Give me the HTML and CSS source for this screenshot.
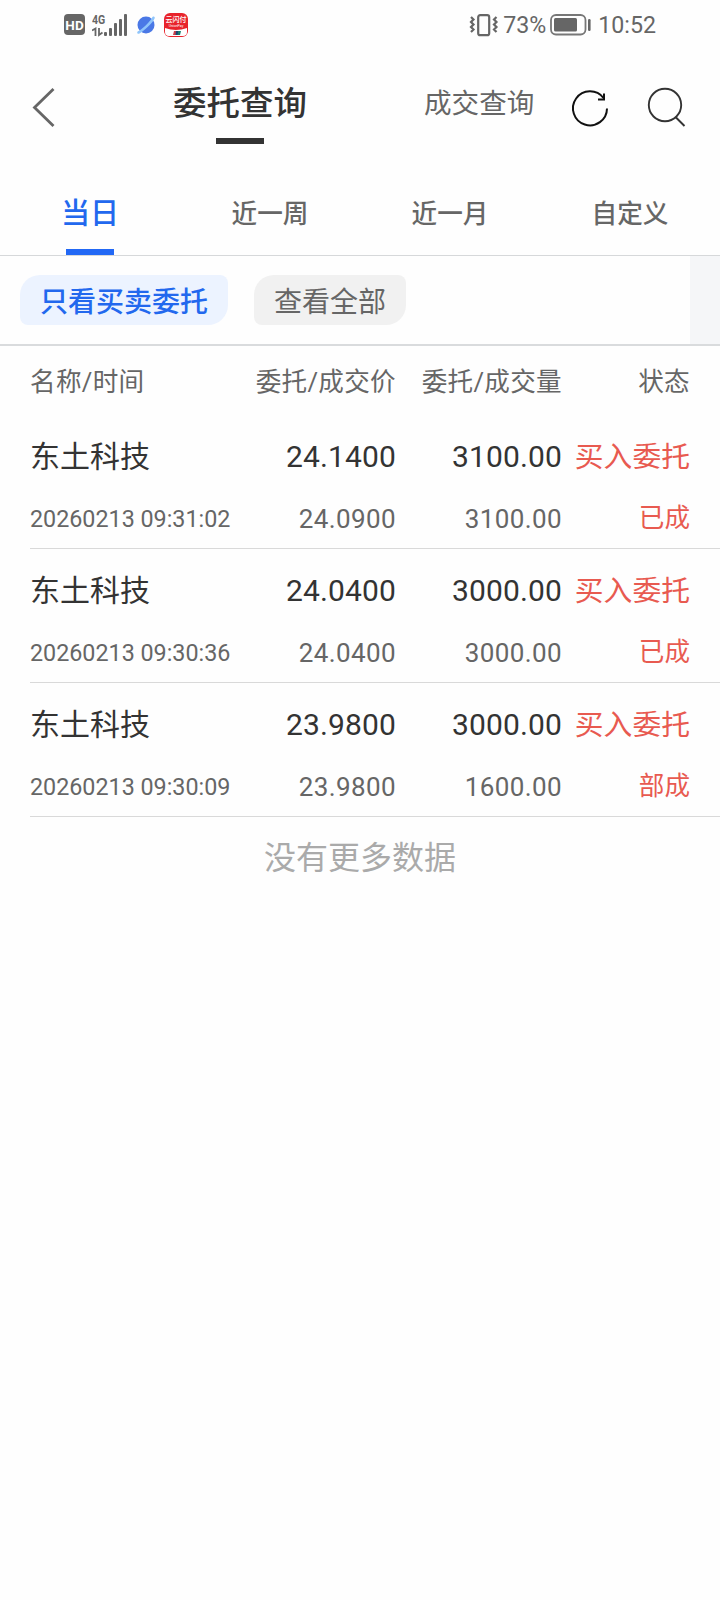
FILE: index.html
```html
<!DOCTYPE html>
<html lang="zh-CN">
<head>
    <meta charset="UTF-8">
    <meta name="viewport" content="width=device-width, initial-scale=1.0">
    <title>委托查询</title>
    <link rel="stylesheet" href="styles.css">
</head>
<body>
    <div class="status-bar">
        <div class="status-left">
            <span class="hd">HD</span>
            <div class="network">
                <span class="net-type">4G</span>
                <svg width="36" height="24" viewBox="0 0 36 24">
                    <g fill="none" stroke="#666" stroke-width="1.8">
                        <path d="M0 17.500L3.500 15.500V23M7 15V22L10.500 19.500"/>
                    </g>
                    <g fill="#666">
                        <rect x="12" y="19" width="3" height="4" rx="1"/>
                        <rect x="17" y="15" width="3" height="8" rx="1"/>
                        <rect x="22" y="10" width="3" height="13" rx="1"/>
                        <rect x="27" y="6" width="3" height="17" rx="1"/>
                        <rect x="32" y="1" width="3" height="22" rx="1"/>
                    </g>
                </svg>
            </div>
            <svg class="planet" width="20" height="20" viewBox="0 0 20 20">
                <circle cx="10" cy="10" r="8.500" fill="#4a78e6"/>
                <path d="M2.500 17.500C6 16 16 7 17.500 2.800" fill="none" stroke="#8fc5fb" stroke-width="2.600" stroke-linecap="round"/>
            </svg>
            <div class="unionpay">
                <span class="unionpay-name">云闪付</span>
                <span class="unionpay-sub">UnionPay</span>
                <svg class="unionpay-base" width="24" height="9" viewBox="0 0 24 9">
                    <path d="M1 0Q12 4 23 0V4Q23 8 19 8H5Q1 8 1 4Z" fill="#fff"/>
                    <path d="M10 3H13L12 7H9Z" fill="#c8414b"/>
                    <path d="M12 3H15L14 7H11.500Z" fill="#1d4773"/>
                    <path d="M14.500 3H17L16 7H13.500Z" fill="#17806f"/>
                </svg>
            </div>
        </div>
        <div class="status-right">
            <svg width="30" height="24" viewBox="0 0 30 24" fill="none" stroke="#666">
                <rect x="9.200" y="2.200" width="11" height="20" rx="2" stroke-width="2.200"/>
                <path d="M2 4L4.500 6.500L2 9L4.500 11.500L2 14L4.500 16.500L2 19M27.500 4L25 6.500L27.500 9L25 11.500L27.500 14L25 16.500L27.500 19" stroke-width="2.200"/>
            </svg>
            <span class="percent">73%</span>
            <svg class="battery" width="42" height="22" viewBox="0 0 42 22">
                <rect x="1" y="1" width="34.500" height="19.500" rx="5" fill="none" stroke="#777" stroke-width="1.800"/>
                <rect x="4" y="4" width="23" height="13.500" rx="1.500" fill="#666"/>
                <rect x="38" y="5" width="2.600" height="12" rx="1.200" fill="#666"/>
            </svg>
            <span class="clock">10:52</span>
        </div>
    </div>

    <div class="header">
        <svg class="back" width="24" height="42" viewBox="0 0 24 42">
            <path d="M21.500 2L2.500 20.500L21.500 39" fill="none" stroke="#666" stroke-width="2.800"/>
        </svg>
        <div class="title active">委托查询</div>
        <div class="title">成交查询</div>
        <svg class="refresh" width="40" height="40" viewBox="0 0 40 40" fill="none" stroke="#111" stroke-width="2">
            <path d="M37 19.500A17 17 0 1 1 33.500 9"/>
            <path d="M34 4.500V10.500H28"/>
        </svg>
        <svg class="search" width="42" height="42" viewBox="0 0 42 42" fill="none" stroke="#333" stroke-width="1.900">
            <circle cx="19" cy="19" r="16.200"/>
            <path d="M29.500 31L38.500 40"/>
        </svg>
    </div>

    <div class="tabs">
        <div class="tab active">当日</div>
        <div class="tab">近一周</div>
        <div class="tab">近一月</div>
        <div class="tab">自定义</div>
    </div>

    <div class="filter">
        <div class="chip active">只看买卖委托</div>
        <div class="chip">查看全部</div>
        <div class="filter-end"></div>
    </div>

    <div class="row table-head">
        <span>名称/时间</span>
        <span>委托/成交价</span>
        <span>委托/成交量</span>
        <span>状态</span>
    </div>

    <div class="list">
        <div class="order">
            <div class="row main">
                <span>东土科技</span>
                <span>24.1400</span>
                <span>3100.00</span>
                <span class="buy">买入委托</span>
            </div>
            <div class="row sub">
                <span class="time">20260213 09:31:02</span>
                <span>24.0900</span>
                <span>3100.00</span>
                <span class="buy">已成</span>
            </div>
        </div>
        <div class="order">
            <div class="row main">
                <span>东土科技</span>
                <span>24.0400</span>
                <span>3000.00</span>
                <span class="buy">买入委托</span>
            </div>
            <div class="row sub">
                <span class="time">20260213 09:30:36</span>
                <span>24.0400</span>
                <span>3000.00</span>
                <span class="buy">已成</span>
            </div>
        </div>
        <div class="order">
            <div class="row main">
                <span>东土科技</span>
                <span>23.9800</span>
                <span>3000.00</span>
                <span class="buy">买入委托</span>
            </div>
            <div class="row sub">
                <span class="time">20260213 09:30:09</span>
                <span>23.9800</span>
                <span>1600.00</span>
                <span class="buy">部成</span>
            </div>
        </div>
    </div>

    <div class="no-more">没有更多数据</div>
</body>
</html>
```
FILE: styles.css
```css
* {
    box-sizing: border-box;
}
body {
    margin: 0;
    min-height: 1600px;
    background: #fefefe;
    color: #666;
    font-family: Roboto, "Noto Sans CJK SC", sans-serif;
}
svg {
    display: block;
    flex-shrink: 0;
}

/* status bar */
.status-bar {
    display: flex;
    justify-content: space-between;
    height: 49px;
    padding: 0 64px 0 63px;
}
.status-left, .status-right {
    display: flex;
    align-items: center;
}
.hd {
    width: 21px;
    height: 21px;
    margin-left: 1px;
    border-radius: 4px;
    background: #666;
    color: white;
    font-size: 13.5px;
    font-weight: 700;
    line-height: 22px;
    text-align: center;
}
.network {
    position: relative;
    margin-left: 7px;
}
.net-type {
    position: absolute;
    left: 0;
    top: 0;
    font-size: 13.5px;
    font-weight: 700;
    line-height: 12px;
    transform: scaleX(0.78);
    transform-origin: left;
}
.planet {
    margin-left: 8px;
}
.unionpay {
    display: flex;
    flex-direction: column;
    align-items: center;
    width: 24px;
    height: 24px;
    margin-left: 8px;
    padding-top: 3px;
    border-radius: 6px;
    background: #e8232b;
    color: white;
}
.unionpay-name {
    font-size: 7px;
    font-weight: 500;
    line-height: 8px;
}
.unionpay-sub {
    font-size: 3.5px;
    line-height: 4px;
}
.percent, .clock {
    font-size: 23.2px;
    line-height: 48px;
    padding-top: 1px;
}
.percent {
    margin-left: 4px;
}
.battery {
    margin: 0 6px 0 4px;
}

/* header */
.header {
    display: flex;
    align-items: flex-start;
    height: 121px;
}
.back {
    margin: 38px 0 0 32px;
}
.title {
    margin-top: 41px;
    margin-left: 117px;
    font-size: 27.6px;
    line-height: 28px;
    white-space: nowrap;
}
.title.active {
    display: flex;
    flex-direction: column;
    align-items: center;
    margin-left: 117px;
    color: #333;
    font-size: 33.5px;
    font-weight: 500;
}
.title.active::after {
    content: "";
    width: 48px;
    height: 6px;
    margin-top: 20px;
    background: #333;
}
.refresh {
    margin: 40px 0 0 36px;
}
.search {
    margin: 37px 0 0 36px;
}

/* tabs */
.tabs {
    display: flex;
    height: 86px;
    border-bottom: 1px solid #d6d8da;
}
.tab {
    flex: 1;
    display: flex;
    flex-direction: column;
    align-items: center;
    font-size: 25.6px;
    font-weight: 500;
    line-height: 88px;
}
.tab.active {
    position: relative;
    color: #2268ee;
    font-size: 29px;
}
.tab.active::after {
    content: "";
    position: absolute;
    bottom: 0;
    width: 48px;
    height: 6px;
    background: #2268f5;
}

/* filter */
.filter {
    display: flex;
    align-items: center;
    gap: 26px;
    height: 90px;
    padding-left: 20px;
    border-bottom: 2px solid #d9dbdd;
}
.chip {
    height: 50px;
    padding: 0 20px;
    border-radius: 20px 8px;
    background: #f1f1f1;
    font-size: 28px;
    line-height: 56px;
}
.chip.active {
    background: #ecf3ff;
    color: #2268ee;
    font-weight: 500;
}
.filter-end {
    width: 30px;
    height: 88px;
    margin-left: auto;
    background: #f5f6f8;
}

/* orders */
.row {
    display: grid;
    grid-template-columns: 200px 166px 166px 128px;
    text-align: right;
    white-space: nowrap;
}
.row span:first-child {
    text-align: left;
}
.table-head {
    height: 69px;
    margin-left: 30px;
    font-size: 25.6px;
    letter-spacing: 0.3px;
    line-height: 73px;
}
.list {
    margin-left: 30px;
}
.order {
    height: 134px;
    padding-top: 12px;
    border-bottom: 1px solid #d9d9d9;
}
.main {
    height: 60px;
    color: #333;
    font-size: 30px;
    line-height: 60px;
}
.main span:nth-child(2), .main span:nth-child(3) {
    letter-spacing: 0.15px;
}
.main .buy {
    font-size: 28.8px;
    line-height: 61px;
}
.sub {
    height: 61px;
    font-size: 26px;
    letter-spacing: 0.4px;
    line-height: 64px;
}
.sub .time {
    font-size: 23.3px;
    letter-spacing: 0;
}
.sub .buy {
    font-size: 25.6px;
    letter-spacing: 0;
    line-height: 62px;
}
.row .buy {
    color: #e85a50;
}
.no-more {
    padding-top: 17px;
    color: #aaa;
    font-size: 32px;
    line-height: 48px;
    text-align: center;
}
```
